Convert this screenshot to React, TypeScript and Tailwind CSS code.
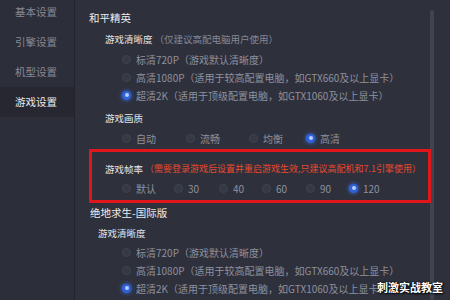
import React from "react";

const menu = ["基本设置", "引擎设置", "机型设置", "游戏设置"];

const Radio = ({ on }: { on?: boolean }) =>
  on ? (
    <span className="w-[9px] h-[9px] rounded-full bg-[#2f62d8] shadow-[0_0_4px_#3d74f0] flex items-center justify-center shrink-0">
      <span className="w-[4px] h-[4px] rounded-full bg-[#b8ccff]" />
    </span>
  ) : (
    <span className="w-[9px] h-[9px] rounded-full bg-[#353845] border border-[#41444f] shrink-0" />
  );

const Option = ({ label, on }: { label: string; on?: boolean }) => (
  <div className="h-[18px] flex items-center gap-[5px] pl-[33px]">
    <Radio on={on} />
    <span className="text-[10px] text-[#8e919d]">{label}</span>
  </div>
);

const clarity = [
  { label: "标清720P（游戏默认清晰度）" },
  { label: "高清1080P（适用于较高配置电脑，如GTX660及以上显卡）" },
  { label: "超清2K（适用于顶级配置电脑，如GTX1060及以上显卡）", on: true },
];

const quality = [
  { label: "自动", w: "w-[64px]" },
  { label: "流畅", w: "w-[63px]" },
  { label: "均衡", w: "w-[57px]" },
  { label: "高清", w: "w-[50px]", on: true },
];

const fps = [
  { label: "默认", w: "w-[52px]" },
  { label: "30", w: "w-[45px]" },
  { label: "40", w: "w-[43px]" },
  { label: "60", w: "w-[44px]" },
  { label: "90", w: "w-[43px]" },
  { label: "120", w: "w-[40px]", on: true },
];

export default function App() {
  return (
    <div className="w-[450px] h-[300px] overflow-hidden flex bg-[#2e303c] font-['Noto_Sans_CJK_SC','Liberation_Sans',sans-serif] relative">
      {/* sidebar */}
      <div className="w-[75px] shrink-0 bg-[#2c2e3a] border-r border-[#22232c]">
        <div className="-mt-[3px]">
          {menu.map((m, i) => (
            <div
              key={m}
              className={
                i === 3
                  ? "h-[30px] flex items-center pl-[15px] text-[10.5px] text-[#ececec] bg-[#262731]"
                  : "h-[30px] flex items-center pl-[15px] text-[10.5px] text-[#878a96]"
              }
            >
              {m}
            </div>
          ))}
        </div>
      </div>

      {/* content */}
      <div className="flex-1 pl-[14px] pt-[8px]">
        <div className="h-[20px] flex items-center text-[10.5px] text-[#ececec]">和平精英</div>
        <div className="h-[22px] flex items-center pl-[16px] text-[9.5px]">
          <span className="text-[#e6e6e6]">游戏清晰度</span>
          <span className="text-[#858894] ml-[2px]">（仅建议高配电脑用户使用）</span>
        </div>
        {clarity.map((c) => (
          <Option key={c.label} label={c.label} on={c.on} />
        ))}
        <div className="h-[28px] flex items-center pl-[16px] text-[9.5px] text-[#e6e6e6]">游戏画质</div>
        <div className="h-[12px] flex items-center pl-[33px]">
          {quality.map((q) => (
            <div key={q.label} className={`${q.w} flex items-center gap-[5px]`}>
              <Radio on={q.on} />
              <span className="text-[10px] text-[#8e919d]">{q.label}</span>
            </div>
          ))}
        </div>
        <div className="h-[20px] mt-[15px] flex items-center pl-[16px] text-[9.5px]">
          <span className="text-[#e6e6e6]">游戏帧率</span>
          <span className="text-[#e84a2e] text-[9px] ml-[2px]">（需要登录游戏后设置并重启游戏生效,只建议高配机和7.1引擎使用）</span>
        </div>
        <div className="h-[18px] flex items-center pl-[33px]">
          {fps.map((f) => (
            <div key={f.label} className={`${f.w} flex items-center gap-[5px]`}>
              <Radio on={f.on} />
              <span className="text-[10px] text-[#8e919d]">{f.label}</span>
            </div>
          ))}
        </div>
        <div className="h-[20px] mt-[6px] flex items-center pl-[1px] text-[10.5px] text-[#ececec]">绝地求生-国际版</div>
        <div className="h-[20px] flex items-center pl-[9px] text-[9.5px] text-[#e6e6e6]">游戏清晰度</div>
        {clarity.map((c) => (
          <Option key={c.label + "2"} label={c.label} on={c.on} />
        ))}
      </div>

      {/* scrollbar */}
      <div className="w-[22px] shrink-0 flex justify-start pl-[2px] pt-[10px]">
        <div className="w-[4px] h-full rounded-full bg-[#41444f]" />
      </div>

      {/* red annotation box */}
      <div className="absolute left-[89px] top-[149px] w-[342px] h-[54px] border-[3px] border-[#e0161a]" />

      {/* watermark */}
      <div className="absolute right-[7px] bottom-[5px] text-[11px] font-bold text-white [text-shadow:0_0_2px_#000,1px_1px_2px_#000]">
        刺激实战教室
      </div>
    </div>
  );
}
